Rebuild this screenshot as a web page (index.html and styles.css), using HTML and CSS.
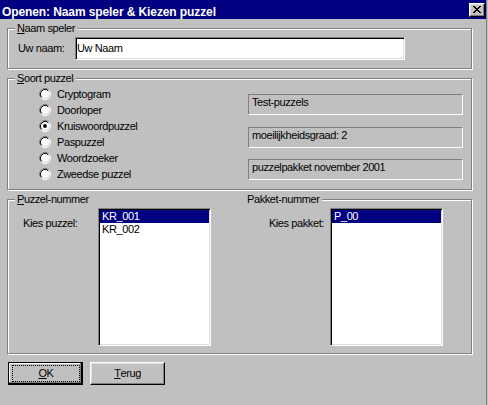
FILE: index.html
```html
<!DOCTYPE html>
<html lang="nl">
<head>
<meta charset="utf-8">
<title>Openen: Naam speler &amp; Kiezen puzzel</title>
<link rel="stylesheet" href="styles.css">
</head>
<body>
<div class="dialog">
  <div class="titlebar">
    <span class="title">Openen: Naam speler &amp; Kiezen puzzel</span>
    <button class="close" aria-label="Sluiten">
      <svg width="8" height="7" viewBox="0 0 8 7" shape-rendering="crispEdges"><path d="M0 0h2v1H0zM6 0h2v1H6zM1 1h2v1H1zM5 1h2v1H5zM2 2h4v1H2zM3 3h2v1H3zM2 4h4v1H2zM1 5h2v1H1zM5 5h2v1H5zM0 6h2v1H0zM6 6h2v1H6z" fill="#000"/></svg>
    </button>
  </div>

  <section class="group">
    <div class="legend"><u>N</u>aam speler</div>
    <div class="name-row">
      <label class="name-label" for="naam">Uw naam:</label>
      <input id="naam" class="textbox" type="text" value="Uw Naam">
    </div>
  </section>

  <section class="group">
    <div class="legend"><u>S</u>oort puzzel</div>
    <div class="type-body">
      <ul class="radios">
        <li class="radio"><svg class="radio-icon" width="12" height="12" viewBox="0 0 12 12"><circle cx="6" cy="6" r="4.5" fill="#fff"/><path d="M2.11 9.89A5.5 5.5 0 0 1 9.89 2.11" fill="none" stroke="#808080"/><path d="M9.89 2.11A5.5 5.5 0 0 1 2.11 9.89" fill="none" stroke="#fff"/><path d="M2.82 9.18A4.5 4.5 0 0 1 9.18 2.82" fill="none" stroke="#000"/><path d="M9.18 2.82A4.5 4.5 0 0 1 2.82 9.18" fill="none" stroke="#dfdfdf"/></svg><span>Cryptogram</span></li>
        <li class="radio"><svg class="radio-icon" width="12" height="12" viewBox="0 0 12 12"><circle cx="6" cy="6" r="4.5" fill="#fff"/><path d="M2.11 9.89A5.5 5.5 0 0 1 9.89 2.11" fill="none" stroke="#808080"/><path d="M9.89 2.11A5.5 5.5 0 0 1 2.11 9.89" fill="none" stroke="#fff"/><path d="M2.82 9.18A4.5 4.5 0 0 1 9.18 2.82" fill="none" stroke="#000"/><path d="M9.18 2.82A4.5 4.5 0 0 1 2.82 9.18" fill="none" stroke="#dfdfdf"/></svg><span>Doorloper</span></li>
        <li class="radio"><svg class="radio-icon" width="12" height="12" viewBox="0 0 12 12"><circle cx="6" cy="6" r="4.5" fill="#fff"/><path d="M2.11 9.89A5.5 5.5 0 0 1 9.89 2.11" fill="none" stroke="#808080"/><path d="M9.89 2.11A5.5 5.5 0 0 1 2.11 9.89" fill="none" stroke="#fff"/><path d="M2.82 9.18A4.5 4.5 0 0 1 9.18 2.82" fill="none" stroke="#000"/><path d="M9.18 2.82A4.5 4.5 0 0 1 2.82 9.18" fill="none" stroke="#dfdfdf"/><circle cx="6" cy="6" r="1.9" fill="#000"/></svg><span>Kruiswoordpuzzel</span></li>
        <li class="radio"><svg class="radio-icon" width="12" height="12" viewBox="0 0 12 12"><circle cx="6" cy="6" r="4.5" fill="#fff"/><path d="M2.11 9.89A5.5 5.5 0 0 1 9.89 2.11" fill="none" stroke="#808080"/><path d="M9.89 2.11A5.5 5.5 0 0 1 2.11 9.89" fill="none" stroke="#fff"/><path d="M2.82 9.18A4.5 4.5 0 0 1 9.18 2.82" fill="none" stroke="#000"/><path d="M9.18 2.82A4.5 4.5 0 0 1 2.82 9.18" fill="none" stroke="#dfdfdf"/></svg><span>Paspuzzel</span></li>
        <li class="radio"><svg class="radio-icon" width="12" height="12" viewBox="0 0 12 12"><circle cx="6" cy="6" r="4.5" fill="#fff"/><path d="M2.11 9.89A5.5 5.5 0 0 1 9.89 2.11" fill="none" stroke="#808080"/><path d="M9.89 2.11A5.5 5.5 0 0 1 2.11 9.89" fill="none" stroke="#fff"/><path d="M2.82 9.18A4.5 4.5 0 0 1 9.18 2.82" fill="none" stroke="#000"/><path d="M9.18 2.82A4.5 4.5 0 0 1 2.82 9.18" fill="none" stroke="#dfdfdf"/></svg><span>Woordzoeker</span></li>
        <li class="radio"><svg class="radio-icon" width="12" height="12" viewBox="0 0 12 12"><circle cx="6" cy="6" r="4.5" fill="#fff"/><path d="M2.11 9.89A5.5 5.5 0 0 1 9.89 2.11" fill="none" stroke="#808080"/><path d="M9.89 2.11A5.5 5.5 0 0 1 2.11 9.89" fill="none" stroke="#fff"/><path d="M2.82 9.18A4.5 4.5 0 0 1 9.18 2.82" fill="none" stroke="#000"/><path d="M9.18 2.82A4.5 4.5 0 0 1 2.82 9.18" fill="none" stroke="#dfdfdf"/></svg><span>Zweedse puzzel</span></li>
      </ul>
      <div class="infos">
        <div class="info">Test-puzzels</div>
        <div class="info">moeilijkheidsgraad: 2</div>
        <div class="info">puzzelpakket november 2001</div>
      </div>
    </div>
  </section>

  <section class="group">
    <div class="legend legend-wide"><span class="legend-left"><u>P</u>uzzel-nummer</span><span>Pakket-nummer</span></div>
    <div class="num-body">
      <label class="kies kies-left">Kies puzzel:</label>
      <ul class="listbox">
        <li class="selected">KR_001</li>
        <li>KR_002</li>
      </ul>
      <label class="kies kies-right">Kies pakket:</label>
      <ul class="listbox">
        <li class="selected">P_00</li>
      </ul>
    </div>
  </section>

  <div class="buttons">
    <button class="btn btn-default"><span class="focus"><u>O</u>K</span></button>
    <button class="btn"><u>T</u>erug</button>
  </div>
</div>
</body>
</html>
```

FILE: styles.css
```css
html, body {
  margin: 0;
  padding: 0;
}

body {
  width: 488px;
  height: 405px;
  overflow: hidden;
  background: #c0c0c0;
  color: #000;
  font-family: "Liberation Sans", Arial, sans-serif;
  font-size: 11px;
  letter-spacing: -0.4px;
  line-height: 13px;
}

.dialog {
  width: 486px;
  height: 405px;
  border-right: 1px solid #808080;
}

/* title bar */
.titlebar {
  display: flex;
  align-items: flex-start;
  height: 19px;
  background: #000080;
  color: #fff;
}

.title {
  padding: 5px 0 0 2px;
  font-size: 12px;
  font-weight: bold;
  letter-spacing: -0.1px;
  line-height: 14px;
  white-space: nowrap;
}

.close {
  display: flex;
  align-items: flex-start;
  justify-content: center;
  box-sizing: border-box;
  width: 16px;
  height: 14px;
  margin: 3px 1px 0 auto;
  padding: 2px 0 0;
  background: #c0c0c0;
  border: 1px solid;
  border-color: #fff #000 #000 #fff;
  box-shadow: inset -1px -1px 0 #808080, inset 1px 1px 0 #dfdfdf;
}

/* group boxes */
.group {
  box-sizing: border-box;
  width: 465px;
  margin: 9px 0 0 7px;
  border: 1px solid #808080;
  box-shadow: 1px 1px 0 #fff, inset 1px 1px 0 #fff;
}

.legend {
  width: max-content;
  margin: -7px 0 0 7px;
  padding: 0 3px 0 2px;
  background: #c0c0c0;
  line-height: 13px;
  white-space: nowrap;
}

.legend-wide {
  display: flex;
}

.legend-left {
  width: 230px;
}

/* naam speler */
.name-row {
  display: flex;
  align-items: center;
  margin-top: 2px;
  padding: 0 0 8px 10px;
}

.name-label {
  width: 57px;
}

.textbox {
  box-sizing: border-box;
  width: 330px;
  height: 23px;
  margin: 0;
  padding: 0 1px 2px;
  font: inherit;
  letter-spacing: inherit;
  color: #000;
  background: #fff;
  border: 1px solid;
  border-color: #808080 #fff #fff #808080;
  box-shadow: inset 1px 1px 0 #000, inset -1px -1px 0 #dfdfdf;
  outline: none;
}

/* soort puzzel */
.type-body {
  display: flex;
  margin-top: 1px;
  padding-bottom: 7px;
}

.radios {
  box-sizing: border-box;
  width: 240px;
  margin: 0;
  padding: 0 0 0 31px;
  list-style: none;
}

.radio {
  display: flex;
  align-items: center;
  gap: 6px;
  height: 16px;
  line-height: 16px;
}

.radio-icon {
  flex: none;
  display: block;
}

.infos {
  display: flex;
  flex-direction: column;
  gap: 11.5px;
  width: 215px;
  margin-top: 8px;
}

.info {
  box-sizing: border-box;
  height: 21px;
  padding: 1px 3px 0;
  border: 1px solid;
  border-color: #808080 #fff #fff #808080;
  white-space: nowrap;
}

/* nummers */
.num-body {
  display: flex;
  align-items: flex-start;
  margin-top: 2px;
  padding: 0 0 7px 15px;
}

.kies {
  margin-top: 9px;
}

.kies-left {
  width: 75px;
}

.kies-right {
  box-sizing: border-box;
  width: 113px;
  margin-right: 6px;
  text-align: right;
}

.listbox {
  box-sizing: border-box;
  width: 113px;
  height: 138px;
  margin: 0;
  padding: 1px;
  list-style: none;
  background: #fff;
  border: 1px solid;
  border-color: #808080 #fff #fff #808080;
  box-shadow: inset 1px 1px 0 #000, inset -1px -1px 0 #dfdfdf;
}

.listbox li {
  height: 13px;
  padding-left: 2px;
  line-height: 13px;
  white-space: nowrap;
}

.listbox .selected {
  background: #000080;
  color: #fff;
}

/* knoppen */
.buttons {
  display: flex;
  gap: 7px;
  margin: 8px 0 0 8px;
}

.btn {
  box-sizing: border-box;
  display: flex;
  align-items: center;
  justify-content: center;
  width: 75px;
  height: 23px;
  margin: 0;
  padding: 0;
  font: inherit;
  letter-spacing: inherit;
  line-height: 13px;
  color: #000;
  background: #c0c0c0;
  border: 1px solid;
  border-color: #fff #000 #000 #fff;
  box-shadow: inset -1px -1px 0 #808080, inset 1px 1px 0 #dfdfdf;
}

.btn-default {
  align-items: stretch;
  border-color: #000;
  box-shadow: inset -1px -1px 0 #000, inset -2px -2px 0 #808080, inset 1px 1px 0 #fff;
}

.focus {
  flex: 1;
  display: flex;
  align-items: center;
  justify-content: center;
  margin: 2px 2px 2px 3px;
  border: 1px dotted #000;
}
```
